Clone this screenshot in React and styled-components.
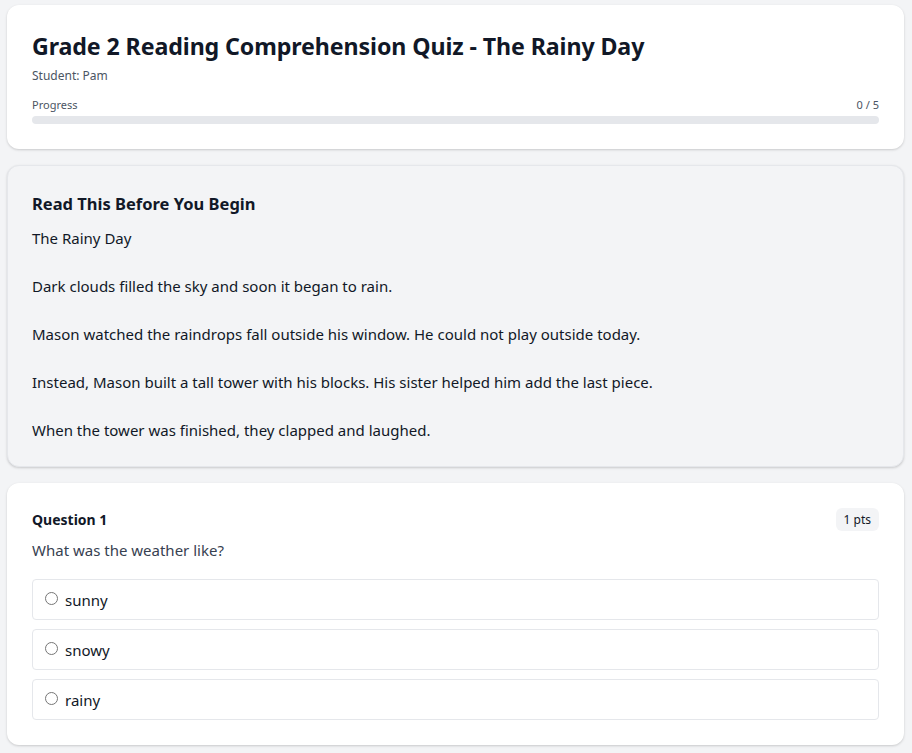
import React from "react";
import styled, { createGlobalStyle } from "styled-components";

const Global = createGlobalStyle`
  * { box-sizing: border-box; }
  body {
    margin: 0;
    background: #f3f4f6;
    font-family: "Noto Sans", "Open Sans", sans-serif;
    color: #111827;
  }
`;

const Page = styled.div`
  display: flex;
  flex-direction: column;
  gap: 16px;
  padding: 5px 8px 8px 7px;
`;

const Card = styled.section`
  background: ${(p) => (p.$muted ? "#f3f4f6" : "#ffffff")};
  border: 1px solid ${(p) => (p.$muted ? "#e5e7eb" : "transparent")};
  border-radius: 12px;
  box-shadow: 0 1px 3px rgba(0, 0, 0, 0.12), 0 1px 2px rgba(0, 0, 0, 0.06);
  padding: ${(p) => p.$pad || "24px"};
`;

const Title = styled.h1`
  margin: 0;
  font-size: 23.2px;
  line-height: 32px;
  font-weight: 700;
  color: #111827;
  letter-spacing: -0.1px;
`;

const Sub = styled.div`
  margin-top: 5px;
  font-size: 12px;
  line-height: 18px;
  color: #4b5563;
`;

const ProgressHead = styled.div`
  display: flex;
  justify-content: space-between;
  margin-top: 12px;
  font-size: 11px;
  line-height: 16px;
  color: #4b5563;
`;

const Track = styled.div`
  margin-top: 3px;
  height: 8px;
  border-radius: 999px;
  background: #e5e7eb;
  overflow: hidden;
`;

const Fill = styled.div`
  height: 100%;
  background: #3b82f6;
`;

const SectionHeading = styled.h2`
  margin: 0 0 9px;
  font-size: 16.5px;
  line-height: 26px;
  font-weight: 700;
  color: #111827;
`;

const Passage = styled.div`
  white-space: pre-wrap;
  font-size: 15px;
  line-height: 24px;
  color: #111827;
`;

const QHead = styled.div`
  display: flex;
  justify-content: space-between;
  align-items: center;
`;

const QLabel = styled.div`
  font-size: 14px;
  font-weight: 700;
  line-height: 22px;
  color: #111827;
`;

const Badge = styled.span`
  background: #f3f4f6;
  border-radius: 6px;
  padding: 3px 8px;
  font-size: 12px;
  line-height: 17px;
  color: #111827;
`;

const QText = styled.div`
  margin-top: 9px;
  font-size: 15px;
  line-height: 20px;
  color: #374151;
`;

const Options = styled.div`
  margin-top: 19px;
  display: flex;
  flex-direction: column;
  gap: 9px;
`;

const Option = styled.label`
  display: flex;
  align-items: center;
  gap: 7px;
  height: 41px;
  padding: 0 12px;
  border: 1px solid #e5e7eb;
  border-radius: 4px;
  background: #fff;
  font-size: 15px;
  color: #111827;
  cursor: pointer;
`;

const Radio = styled.span`
  width: 13px;
  height: 13px;
  border-radius: 50%;
  border: 1px solid #767676;
  margin-top: -3px;
  flex: none;
`;

const passage = `The Rainy Day

Dark clouds filled the sky and soon it began to rain.

Mason watched the raindrops fall outside his window. He could not play outside today.

Instead, Mason built a tall tower with his blocks. His sister helped him add the last piece.

When the tower was finished, they clapped and laughed.`;

export default function App() {
  const answered = 0;
  const total = 5;
  return (
    <>
      <Global />
      <Page>
        <Card $pad="24px 24px 24px">
          <Title>Grade 2 Reading Comprehension Quiz - The Rainy Day</Title>
          <Sub>Student: Pam</Sub>
          <ProgressHead>
            <span>Progress</span>
            <span>
              {answered} / {total}
            </span>
          </ProgressHead>
          <Track>
            <Fill style={{ width: `${(answered / total) * 100}%` }} />
          </Track>
        </Card>
        <Card $muted $pad="25px 24px 24px">
          <SectionHeading>Read This Before You Begin</SectionHeading>
          <Passage>{passage}</Passage>
        </Card>
        <Card $pad="24px 24px 24px">
          <QHead>
            <QLabel>Question 1</QLabel>
            <Badge>1 pts</Badge>
          </QHead>
          <QText>What was the weather like?</QText>
          <Options>
            {["sunny", "snowy", "rainy"].map((o) => (
              <Option key={o}>
                <Radio />
                {o}
              </Option>
            ))}
          </Options>
        </Card>
      </Page>
    </>
  );
}
